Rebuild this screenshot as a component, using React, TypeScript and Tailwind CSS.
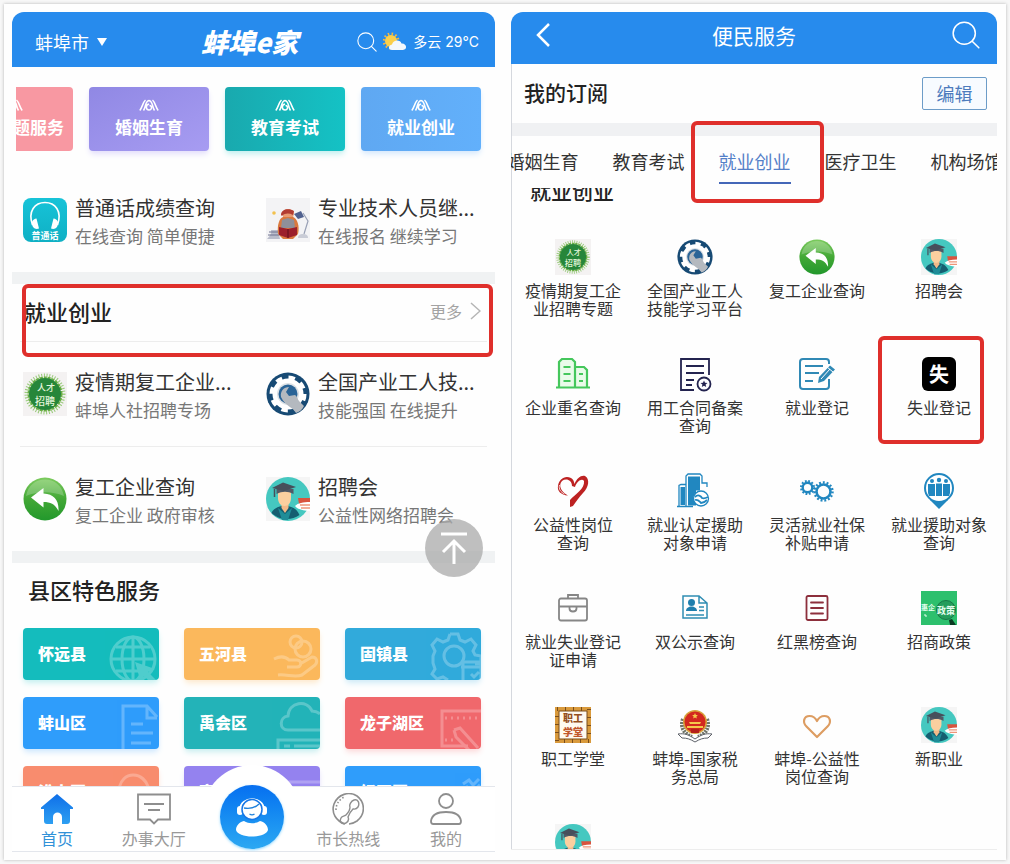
import type { ReactNode } from 'react'

interface IconProps {
  className?: string
}

/* ---------- shared service icons ---------- */

function SearchIcon({ className }: IconProps) {
  return (
    <svg viewBox="0 0 24 24" className={className} fill="none" stroke="currentColor" strokeWidth="1.300" strokeLinecap="round">
      <circle cx="10.5" cy="10.5" r="9.500" />
      <path d="M17.3 17.3 23 23" />
    </svg>
  )
}

function HeadphoneIcon({ className }: IconProps) {
  return (
    <svg viewBox="0 0 44 44" className={className}>
      <defs>
        <linearGradient id="hp" x1="0" y1="0" x2="0" y2="1">
          <stop offset="0" stopColor="#17c3d8" />
          <stop offset="1" stopColor="#0fb0c4" />
        </linearGradient>
      </defs>
      <rect width="44" height="44" rx="8" fill="url(#hp)" />
      <path d="M9.500 27C4.500 13 12 4.500 22 4.500S39.500 13 34.500 27" fill="none" stroke="#fff" strokeWidth="1.600" />
      <path d="M13.500 20.500c-4 .5-6 4-3.500 8.500 1.500 2 4 2.500 6 1.500zM30.500 20.500c4 .5 6 4 3.500 8.500-1.500 2-4 2.500-6 1.500z" fill="#fff" />
      <text x="22" y="41" textAnchor="middle" fontSize="9" fontWeight="700" fill="#fff">普通话</text>
    </svg>
  )
}

function ReaderIcon({ className }: IconProps) {
  return (
    <svg viewBox="0 0 44 44" className={className}>
      <rect width="44" height="44" fill="#f3f3f5" />
      <path d="M1 41c3-3 5-6 4-9h7l2 9z" fill="#b9bccb" />
      <path d="M3 34h10M2 37h11" stroke="#6e7390" />
      <circle cx="8" cy="15" r="1.800" fill="#f2c14e" />
      <path d="M17 20v-5c0-3 3-4 5-4s6 1 6 4l-1 5z" fill="#e89a72" />
      <path d="M15 17c0-6 8-7 13-4l-1 4c-4-2-8-2-11 1z" fill="#b23c32" />
      <path d="M12 36c-1-8 1-16 5-17h10c4 1 7 9 5 17l-5 5H17z" fill="#d9793f" />
      <path d="M16 22l6-2 6 2 1 8H15z" fill="#8f8f99" />
      <path d="M13 29l9 2 9-2v8l-9 3-9-3z" fill="#9c1f2c" />
      <path d="M22 31v9" stroke="#5e0f19" />
      <path d="M28 16l7-3 3 6-6 2z" fill="#50618f" />
      <path d="M37 15l5 8-4 13" fill="none" stroke="#98a0b5" strokeWidth="1.200" />
      <path d="M32 40c0-3 2-4 5-4s5 1 5 4z" fill="#c9ccd6" />
    </svg>
  )
}

function TalentIcon({ className }: IconProps) {
  return (
    <svg viewBox="0 0 44 44" className={className}>
      <rect width="44" height="44" fill="#f4f2f2" />
      <circle cx="22" cy="22" r="18" fill="none" stroke="#9acb7c" strokeWidth="5" strokeDasharray="1 1.600" />
      <circle cx="22" cy="22" r="16.500" fill="none" stroke="#6aae45" strokeWidth="2" strokeDasharray="3 1" />
      <circle cx="22" cy="22" r="16" fill="#26863a" />
      <g fill="#e4f6da" fontWeight="500" textAnchor="middle">
        <text x="23" y="19" fontSize="9">人才</text>
        <text x="22" y="33" fontSize="10">招聘</text>
      </g>
    </svg>
  )
}

function GearWrenchIcon({ className }: IconProps) {
  return (
    <svg viewBox="0 0 44 44" className={className}>
      <circle cx="22" cy="22" r="21.500" fill="#174a74" />
      <circle cx="22" cy="22" r="15.500" fill="#fff" />
      <circle cx="22" cy="22" r="16" fill="none" stroke="#fff" strokeWidth="5" strokeDasharray="6.300 6.270" />
      <circle cx="22" cy="22" r="11" fill="#dde1e5" />
      <circle cx="22" cy="22" r="9.500" fill="#2a6497" />
      <path d="M15 25c-1-6 3-10 8-10l-3 5 3 4 6-1c2 1 2 3 4 6l5 5c-2 4-5 6-8 7-3-6-11-7-15-16z" fill="#b4b9bf" />
    </svg>
  )
}

function ReplyIcon({ className }: IconProps) {
  return (
    <svg viewBox="0 0 44 44" className={className}>
      <defs>
        <linearGradient id="reply" x1="0" y1="0" x2="0" y2="1">
          <stop offset="0" stopColor="#7ccb5e" />
          <stop offset=".5" stopColor="#43a836" />
          <stop offset="1" stopColor="#22982c" />
        </linearGradient>
      </defs>
      <circle cx="22" cy="22" r="21.500" fill="url(#reply)" />
      <path d="M3 19C5 8 13 2.500 22 2.500S39 8 41 19c-12-5-26-5-38 0z" fill="#fff" opacity=".22" />
      <path d="M8 20.500 20.500 11v5.500C31 17 36 23 35.500 34 32 27 28 25 20.500 25v5.500z" fill="#fff" />
    </svg>
  )
}

function GraduateIcon({ className }: IconProps) {
  return (
    <svg viewBox="0 0 44 44" className={className}>
      <rect width="44" height="44" fill="#f5f5f5" />
      <circle cx="22" cy="22" r="22" fill="#45c8c0" />
      <path d="M5.500 36c2-5 7-6 10-7h6c4 1 9 2 12 9a22 22 0 0 1-28-2z" fill="#155e70" />
      <path d="M12 31l4 12h6l4-12-7 6z" fill="#1f8d98" />
      <path d="M15.500 25h7v6L19 36l-3.500-5z" fill="#f2b988" />
      <path d="M12 14h13v7c0 5-3 8-6.500 8S12 26 12 21z" fill="#fbcf9f" />
      <path d="M10.500 12h17v5c-6-3-11-3-17 0z" fill="#515966" />
      <path d="M6 11 17 5.500l13 4.500-12 4z" fill="#474f5b" />
      <path d="M8.500 12v8" stroke="#474f5b" strokeWidth="1.500" />
      <path d="M32 21h12v6H33z" fill="#d9543f" />
      <path d="M29 29c3-3 8-4 15-4v9c-5 0-9-1-13-3z" fill="#fff" />
      <path d="M34 28h10M35 31h9" stroke="#ee9579" strokeWidth="1.500" />
    </svg>
  )
}

/* ---------- icons used only on the service grid ---------- */

function BuildingIcon({ className }: IconProps) {
  return (
    <svg viewBox="0 0 36 36" className={className} fill="none" stroke="#45c75c" strokeWidth="2.200">
      <path d="M4 31.500V6l3-3h10l3 3v5h9l3 3v17.500z" fill="#e9fbe9" stroke="none" />
      <path d="M1 31.500h34M4 31V6l3-3h10l3 3v25M20 11h9l3 3v17" />
      <path d="M8.500 11h7M8.500 18h7M8.500 25h7M24 18h4M24 25h4" strokeWidth="1.800" />
    </svg>
  )
}

function ContractIcon({ className }: IconProps) {
  return (
    <svg viewBox="0 0 36 36" className={className} fill="none" stroke="#23234f" strokeWidth="1.800">
      <path d="M17 34H4V3h28v16" />
      <path d="M9 10h18M9 17h18M9 24h8M9 29h6" />
      <circle cx="27" cy="28" r="6.500" />
      <path d="m27 24.500 1 2.300 2.500.2-1.900 1.600.6 2.400-2.200-1.300-2.200 1.300.6-2.400-1.900-1.600 2.500-.2z" fill="#23234f" stroke="none" />
    </svg>
  )
}

function RegisterIcon({ className }: IconProps) {
  return (
    <svg viewBox="0 0 36 36" className={className} fill="none" stroke="#3089b5" strokeWidth="2">
      <path d="M30 8V6c0-2-1-3-3-3H4C2 3 1 4 1 6v24c0 2 1 3 3 3h23c2 0 3-1 3-3v-7" />
      <path d="M6 10h18M6 17h14M6 25h8" />
      <path d="M19 27l1-6L31 9.500l5 4L25 25z" fill="#3089b5" stroke="none" />
      <path d="M22 23 31 13M28 11l6 5" stroke="#fff" strokeWidth="1" />
    </svg>
  )
}

function UnemployIcon({ className }: IconProps) {
  return (
    <svg viewBox="0 0 36 36" className={className}>
      <rect x="1" y="1" width="34" height="34" rx="6" fill="#000" />
      <text x="18" y="25.500" textAnchor="middle" fontSize="20" fontWeight="700" fill="#fff">失</text>
    </svg>
  )
}

function RibbonHeartIcon({ className }: IconProps) {
  return (
    <svg viewBox="0 0 36 36" className={className}>
      <path
        d="M13 22.500C6 22 2 18 3 13 4 6 10 2 16 5c2 1 3 3 3.500 6C22 5 26 2 30 3c5 3 4 11-2 17-4 4-7 9-10 13l-3 1v-7c5-6 15-11 14-19-2-3-7 0-9 6l-3-1c0-6-6-8-10-5-4 4-1 11 6 14.500z"
        fill="#bd2222"
      />
      <path d="M4.500 12c-1 4 1 7 5 9" stroke="#fff" strokeWidth=".8" fill="none" />
    </svg>
  )
}

function CityHandIcon({ className }: IconProps) {
  return (
    <svg viewBox="0 0 36 36" className={className} fill="#2187c0">
      <path d="M11 3.500h12v14h-4v15h-8z" />
      <path d="M3.500 14H8v18H3.500z" />
      <g fill="none" stroke="#2187c0" strokeWidth="1.300">
        <path d="M9 33V3l2-2h12l2 2v7h5v4M2 33V12.500l2-1h5M0 33.500h16" />
        <circle cx="24" cy="25.500" r="7.500" fill="#fff" />
        <path d="M18 24c3-3 6-1 7 1 2 1 4 0 6-1M18 27c3-1 4 1 6 3 2 0 4-1 6-3" strokeWidth="1.800" />
      </g>
    </svg>
  )
}

function CogsIcon({ className }: IconProps) {
  return (
    <svg viewBox="0 0 36 36" className={className} fill="none" stroke="#2187c0">
      <circle cx="8.500" cy="14.500" r="4.800" strokeWidth="2.400" />
      <circle cx="8.500" cy="14.500" r="6.500" strokeWidth="2" strokeDasharray="1.800 1.600" />
      <circle cx="24.500" cy="18.500" r="7" strokeWidth="2.600" />
      <circle cx="24.500" cy="18.500" r="9" strokeWidth="2.500" strokeDasharray="1.900 1.870" />
    </svg>
  )
}

function PeoplePinIcon({ className }: IconProps) {
  return (
    <svg viewBox="0 0 36 36" className={className}>
      <path d="M9 27h18l-9 9z" fill="#2187c0" />
      <circle cx="18" cy="15" r="14" fill="#fff" stroke="#2187c0" strokeWidth="2" />
      <g fill="#2187c0">
        <circle cx="11" cy="8" r="2" />
        <circle cx="18" cy="7" r="2.200" />
        <circle cx="25" cy="8" r="2" />
        <path d="M7 11h7v12H8l-1-3zM15 10.500h6V23h-6zM22 11h7v9l-1 3h-6z" />
      </g>
    </svg>
  )
}

function BriefcaseIcon({ className }: IconProps) {
  return (
    <svg viewBox="0 0 36 36" className={className} fill="none" stroke="#868686" strokeWidth="1.800">
      <rect x="4" y="8.500" width="28" height="22" rx="2" />
      <path d="M13 8.500V5h10v3.500M4 16.500h28M14.500 16.500v2c0 4 7 4 7 0v-2" />
    </svg>
  )
}

function IdPaperIcon({ className }: IconProps) {
  return (
    <svg viewBox="0 0 36 36" className={className} fill="none" stroke="#2f8db3" strokeWidth="1.500">
      <path d="M6 6h16l8 7v15H6zM22 6v7h8" />
      <circle cx="14.500" cy="12.500" r="3.500" fill="#1f7fae" stroke="none" />
      <path d="M9 21c0-6 11-6 11 0z" fill="#1f7fae" stroke="none" />
      <path d="M22 17h5M22 20.500h5M9 25h18" />
    </svg>
  )
}

function ListBoardIcon({ className }: IconProps) {
  return (
    <svg viewBox="0 0 36 36" className={className} fill="none" stroke="#8d2f3c" strokeWidth="1.800" strokeLinecap="round">
      <rect x="7.500" y="6" width="21" height="24" rx="1.500" />
      <path d="M12 12.500h12M12 18h12M12 23.500h12" />
    </svg>
  )
}

function PolicyIcon({ className }: IconProps) {
  return (
    <svg viewBox="0 0 36 36" className={className}>
      <rect y="1" width="36" height="34" fill="#2dc06d" />
      <text x="0" y="20" fontSize="7" fontWeight="700" fill="#e6fff0">惠企</text>
      <path d="M3 25h2v2" stroke="#e6fff0" fill="none" />
      <circle cx="25" cy="20" r="9.500" fill="#259d5b" stroke="#187747" />
      <text x="25" y="24" fontSize="9" fontWeight="700" textAnchor="middle" fill="#e6fff0">政策</text>
      <path d="m28 30 3-1 4 6h-6z" fill="#0b3a22" />
    </svg>
  )
}

function SchoolIcon({ className }: IconProps) {
  return (
    <svg viewBox="0 0 36 36" className={className}>
      <rect width="36" height="36" fill="#d99a3c" />
      <rect x="2" y="2" width="32" height="32" fill="none" stroke="#7a4d1a" strokeWidth="4" strokeDasharray="1 7" />
      <rect x="4" y="4" width="28" height="28" fill="#fffaf0" stroke="#7a4d1a" />
      <g fontSize="10" fontWeight="900" textAnchor="middle">
        <text x="18" y="15" fill="#94501f">职工</text>
        <text x="18" y="29" fill="#c0562b">学堂</text>
      </g>
    </svg>
  )
}

function TaxIcon({ className }: IconProps) {
  return (
    <svg viewBox="0 0 36 36" className={className}>
      <path d="M6 12c-3 8 1 15 9 18M30 12c3 8-1 15-9 18" fill="none" stroke="#6f7468" strokeWidth="4" strokeDasharray="2 1" />
      <circle cx="18" cy="15" r="12" fill="#d8a13a" />
      <circle cx="18" cy="15" r="10.500" fill="#d3281f" />
      <path d="m18 6 .9 1.900 2 .2-1.500 1.400.4 2-1.800-1-1.800 1 .4-2-1.500-1.400 2-.2zM12 15h12l-1 2H13zM10 19h16v2H10z" fill="#f5c84b" />
      <path d="M14 22h8v4h-8z" fill="#b5201a" />
      <path d="M1 27c7-1 11 1 17 5 6-4 10-6 17-5l-4 4c-5 0-8 1-13 4-5-3-8-4-13-4z" fill="#fff" stroke="#5c6068" />
    </svg>
  )
}

function HeartIcon({ className }: IconProps) {
  return (
    <svg viewBox="0 0 36 36" className={className} fill="none" stroke="#dd9d62" strokeWidth="2.200" strokeLinejoin="round">
      <path d="M18 30 7.500 19.500C3 15 5 9 10.500 9c4 0 6 2 7.500 5 1.500-3 3.500-5 7.500-5C31 9 33 15 28.500 19.500z" />
    </svg>
  )
}

/* ---------- left phone ---------- */

function SpiralMark() {
  return (
    <svg viewBox="0 0 20 12" className="h-3 w-5" fill="none" stroke="#fff" strokeWidth="1.500">
      <path d="M.8 11.500C3 9 4 3 6.500 1M19.200 11.500C17 9 16 3 13.500 1" />
      <path d="M4.500 11.500C7 8 6 2 10 1.500c4 .5 3 6.500 5.500 10M10 5c-4 1-3 6 0 6s3.500-4.500.5-4.500" />
    </svg>
  )
}

const topics = [
  { label: '特色主题服务', color: 'bg-[#f898a2]' },
  { label: '婚姻生育', color: 'bg-linear-to-br from-[#9088e4] to-[#a79cf2] shadow-md shadow-[#e4e0fb]' },
  { label: '教育考试', color: 'bg-linear-to-r from-[#19a9ae] to-[#14c2c5] shadow-md shadow-[#c5f0f0]' },
  { label: '就业创业', color: 'bg-linear-to-r from-[#5fa8f2] to-[#62b0fb] shadow-md shadow-[#d8eafd]' },
]

function ServiceItem({ icon, title, note }: { icon: ReactNode; title: string; note: string }) {
  return (
    <a href="#service" className="flex gap-2">
      <span className="flex h-12 w-11 shrink-0 items-center">{icon}</span>
      <span className="flex flex-col gap-1 whitespace-nowrap leading-6">
        <span className="text-[20px] text-[#333]">{title}</span>
        <span className="text-[17px] text-[#777]">{note}</span>
      </span>
    </a>
  )
}

function ServiceRow({ children }: { children: ReactNode }) {
  return <div className="grid grid-cols-[243fr_229fr] pt-7 pb-6 pl-[11px]">{children}</div>
}

const districts = [
  {
    name: '怀远县',
    color: 'bg-[#14bcbd] shadow-[#c9f1f1]',
    art: (
      <>
        <circle cx="34" cy="31" r="22" />
        <ellipse cx="34" cy="31" rx="11" ry="22" />
        <path d="M34 9v44M12 31h44M17 19h34M17 43h24" />
        <path d="m36 34 20 7-7 3 8 8-4 4-8-8-3 7z" fill="#fff" stroke="none" />
      </>
    ),
  },
  {
    name: '五河县',
    color: 'bg-[#fbb85c] shadow-[#fdebd2]',
    art: (
      <>
        <circle cx="36" cy="14" r="6" />
        <circle cx="43" cy="21" r="8" />
        <path d="M14 31c6-3 11-3 15 1h8c5 0 5 7 0 7H27M40 36l12-7c5 0 6 5 3 8L42 47c-7 3-15-1-24 0" />
      </>
    ),
  },
  {
    name: '固镇县',
    color: 'bg-[#31aadb] shadow-[#d2ecf8]',
    art: (
      <>
        <circle cx="33" cy="28" r="10" />
        <path d="M29 6h8l2 6 5 2 6-3 5 6-3 6 2 4 6 1v8h-6M29 6l-2 6-5 2-6-3-5 6 3 6-2 5-0 7 2 6-3 5 5 5 6-2 5 3" />
        <path d="M42 34h18v20H42zM40 39h20M50 46l3 3 5-5" />
      </>
    ),
  },
  {
    name: '蚌山区',
    color: 'bg-[#2f9dfb] shadow-[#d2e9fe]',
    art: <path d="M24 54V9h24l10 11M48 9v12h10M32 27h12M32 36h22M32 46h20" />,
  },
  {
    name: '禹会区',
    color: 'bg-[#23b3b8] shadow-[#cdeff0]',
    art: (
      <>
        <path d="M60 33H28c-9 0-9-13 0-14 1-14 19-17 24-5 4 0 6 1 8 3" />
        <path d="M18 54V43h42M24 49h6M34 49h26" />
      </>
    ),
  },
  {
    name: '龙子湖区',
    color: 'bg-[#f0686c] shadow-[#fcdcdd]',
    art: (
      <>
        <path d="M60 14H21v35h26" />
        <path d="M24 21h36M24 43h12" strokeDasharray="2 4" />
        <path d="m33 33 6-2 18 20M33 33l2 7 14 14" />
      </>
    ),
  },
  {
    name: '淮上区',
    color: 'bg-[#f88c6e] shadow-[#fde2da]',
    art: <path d="M20 24c2-20 26-20 30 0M50 24c6 0 8 4 10 8" />,
  },
  {
    name: '高新区',
    color: 'bg-[#9482ef] shadow-[#e4e0fb]',
    art: <path d="M18 16h42M18 24h42M18 16v30" />,
  },
  {
    name: '经开区',
    color: 'bg-[#2f9dfb] shadow-[#d2e9fe]',
    art: <path d="m42 18 6-4 4 5 6-6M40 24l6-3 5 5 8-7" />,
  },
]

function HomePhone() {
  return (
    <section className="relative flex min-w-0 flex-col overflow-hidden" aria-label="蚌埠e家首页">
      <header className="flex h-[55px] shrink-0 items-center rounded-t-xl bg-[#278bed] pt-1 pr-4 pl-[23px] text-white">
        <button type="button" className="flex w-[166px] items-center gap-2 text-[18px] leading-6">
          蚌埠市
          <svg viewBox="0 0 10 8" className="h-2 w-2.5" fill="#fff">
            <path d="M0 0h10L5 8z" />
          </svg>
        </button>
        <h1 className="text-[27px] leading-8 font-black italic">蚌埠e家</h1>
        <div className="ml-auto flex items-center gap-1.5 whitespace-nowrap">
          <button type="button" aria-label="搜索">
            <SearchIcon className="h-5 w-5" />
          </button>
          <svg viewBox="0 0 24 20" className="h-5 w-6 shrink-0">
            <circle cx="8" cy="9" r="7" fill="none" stroke="#f6b93c" strokeWidth="3" strokeDasharray="1.500 2.200" />
            <circle cx="8" cy="9" r="6" fill="#fbcf4b" />
            <path d="M9 18c-4 0-4-5 0-5.500C10 8 17 7 18.500 11.500c5-.5 6.500 6 1.500 6.500z" fill="#f4f8fd" />
          </svg>
          <span className="font-[Inter,'Noto_Sans_CJK_SC',sans-serif] text-[14px] leading-6">多云 29°C</span>
        </div>
      </header>

      <div className="relative min-h-0 flex-1 overflow-hidden">
        <div className="mr-[9px] ml-1 flex justify-end gap-4 overflow-hidden pt-5 pr-[5px] pb-[17px]">
          {topics.map((t) => (
            <a
              key={t.label}
              href="#topic"
              className={`flex h-16 w-[120px] shrink-0 flex-col items-center justify-center gap-1 rounded-sm text-[17px] leading-6 font-bold whitespace-nowrap text-white ${t.color}`}
            >
              <SpiralMark />
              {t.label}
            </a>
          ))}
        </div>

        <ServiceRow>
          <ServiceItem icon={<HeadphoneIcon className="h-11 w-11" />} title="普通话成绩查询" note="在线查询 简单便捷" />
          <ServiceItem icon={<ReaderIcon className="h-11 w-11" />} title="专业技术人员继..." note="在线报名 继续学习" />
        </ServiceRow>

        <div className="relative border-t-12 border-[#f0f2f3]">
          <div className="flex h-[58px] items-center justify-between pr-[14px] pb-1 pl-3">
            <h2 className="text-[22px] leading-7 font-medium text-[#222]">就业创业</h2>
            <a href="#more" className="flex items-center gap-2 text-[16px] leading-6 text-[#a3a3a3]">
              更多
              <svg viewBox="0 0 11 18" className="h-[18px] w-[11px]" fill="none" stroke="#b5b5b5" strokeWidth="1.500">
                <path d="m1 1 9 8-9 8" />
              </svg>
            </a>
          </div>
          <div className="absolute top-0 right-0.5 left-2.5 h-[73px] rounded-md border-4 border-[#df2f2b]" />
        </div>
        <div className="mx-2 -mt-px h-px bg-[#ededed]" />

        <ServiceRow>
          <ServiceItem icon={<TalentIcon className="h-11 w-11" />} title="疫情期复工企业..." note="蚌埠人社招聘专场" />
          <ServiceItem icon={<GearWrenchIcon className="h-11 w-11" />} title="全国产业工人技..." note="技能强国 在线提升" />
        </ServiceRow>
        <div className="mx-2 h-px bg-[#ededed]" />
        <ServiceRow>
          <ServiceItem icon={<ReplyIcon className="h-11 w-11" />} title="复工企业查询" note="复工企业 政府审核" />
          <ServiceItem icon={<GraduateIcon className="h-11 w-11" />} title="招聘会" note="公益性网络招聘会" />
        </ServiceRow>

        <div className="border-t-12 border-[#f0f2f3] px-4 pt-3 pb-[25px]">
          <h2 className="text-[22px] leading-7 font-medium text-[#222]">县区特色服务</h2>
        </div>
        <div className="grid grid-cols-3 gap-x-[25px] gap-y-[17px] pr-[14px] pl-[11px]">
          {districts.map((d) => (
            <a
              key={d.name}
              href="#district"
              className={`relative flex h-[52px] items-center overflow-hidden rounded-sm pb-0.5 pl-[15px] text-[16px] leading-6 font-black text-white shadow-md ${d.color}`}
            >
              <svg viewBox="0 0 60 52" className="absolute right-0 bottom-0 h-[52px] w-[60px] opacity-25" fill="none" stroke="#fff" strokeWidth="3">
                {d.art}
              </svg>
              {d.name}
            </a>
          ))}
        </div>

        <button
          type="button"
          aria-label="返回顶部"
          className="absolute top-[452px] right-3 flex h-[58px] w-[58px] items-center justify-center rounded-full bg-[#a9a9a9]/75"
        >
          <svg viewBox="0 0 28 32" className="h-8 w-7" fill="none" stroke="#fff" strokeWidth="3">
            <path d="M1 2h26M14 32V9M3 20 14 9l11 11" />
          </svg>
        </button>
      </div>

      <nav className="relative grid h-[66px] shrink-0 grid-cols-[90fr_104fr_94fr_98fr_98fr] border-y border-[#e3e6ec] bg-white pt-1.5 text-[16px] leading-5 text-[#999]">
        <a href="#home" className="flex flex-col items-center gap-[3px] text-[#3191d8]">
          <svg viewBox="0 0 32 32" className="h-8 w-8">
            <defs>
              <linearGradient id="home" x1="0" y1="0" x2="0" y2="1">
                <stop offset="0" stopColor="#0f6fe8" />
                <stop offset="1" stopColor="#2d9ff2" />
              </linearGradient>
            </defs>
            <path d="M16 1 32 14.500v1.500h-3v12c0 2-1 3-3 3h-5v-7c0-6-9-6-9 0v7H6c-2 0-3-1-3-3V16H0v-1.500z" fill="url(#home)" />
          </svg>
          首页
        </a>
        <a href="#hall" className="flex flex-col items-center gap-[3px]">
          <svg viewBox="0 0 34 32" className="h-8 w-[34px]" fill="none" stroke="#8e8e8e" strokeWidth="1.800">
            <path d="M1 1.500h32v25H21L17 30.500l-4-4H1zM7 11h20M11 17h12" />
          </svg>
          办事大厅
        </a>
        <a href="#assistant" aria-label="智能客服" className="relative">
          <span className="absolute -top-7 left-1/2 h-[98px] w-[98px] -translate-x-1/2 rounded-full bg-white [clip-path:inset(0_0_20px_0)]" />
          <span className="absolute -top-2 left-1/2 flex h-16 w-16 -translate-x-1/2 items-center justify-center rounded-full bg-linear-to-b from-[#086ff0] to-[#2ca8f2] shadow-sm shadow-[#9fdcff]">
            <svg viewBox="0 0 32 40" className="h-10 w-8">
              <path d="M4 12C5 -1 27 -1 28 12" fill="none" stroke="#fff" strokeWidth="1.800" />
              <rect x="1" y="9" width="6" height="9" rx="3" fill="#fff" />
              <rect x="25" y="9" width="6" height="9" rx="3" fill="#fff" />
              <circle cx="16" cy="12.500" r="10" fill="#fff" stroke="#1777e6" strokeWidth="1.500" />
              <path d="M8 11c6 1 12-1 15-4M13.500 17c2 1.500 3 1.500 5 0" fill="none" stroke="#1d80dc" strokeWidth="1.300" />
              <path d="M8 24c5 3 11 3 16 0 5 1 8 5 8 9-1 4-8 6.500-16 6.500S1 37 0 33c0-4 3-8 8-9z" fill="#fff" />
            </svg>
          </span>
        </a>
        <a href="#hotline" className="flex flex-col items-center gap-[3px]">
          <svg viewBox="0 0 32 32" className="h-8 w-8" fill="none" stroke="#8e8e8e" strokeWidth="1.600">
            <path d="M13 31C4 28-1 20 2 11 6 1 17-2 25 3c8 6 9 18 0 25-3 2-5 3-8 3" />
            <path d="M22 7c4-1 6 3 4 7-2 3-4 2-5 2-2 2-4 5-5 8 1 2 1 4-2 6-4 2-7-1-5-5 1-2 4-2 5-3 2-2 4-5 4-8-1-2 1-6 4-7z" strokeWidth="1.400" />
            <path d="M4 17c0-6 3-10 8-13" strokeDasharray="1.500 2" />
          </svg>
          市长热线
        </a>
        <a href="#me" className="flex flex-col items-center gap-[3px]">
          <svg viewBox="0 0 32 32" className="h-8 w-8" fill="none" stroke="#8e8e8e" strokeWidth="1.800">
            <circle cx="16" cy="8" r="7" />
            <path d="M3 31c-2 0-2-2-2-3 1-7 7-9 15-9s14 2 15 9c0 1 0 3-2 3z" />
          </svg>
          我的
        </a>
      </nav>
    </section>
  )
}

/* ---------- right phone ---------- */

const tabs = ['婚姻生育', '教育考试', '就业创业', '医疗卫生', '机构场馆']

const services = [
  { label: '疫情期复工企\n业招聘专题', Icon: TalentIcon },
  { label: '全国产业工人\n技能学习平台', Icon: GearWrenchIcon },
  { label: '复工企业查询', Icon: ReplyIcon },
  { label: '招聘会', Icon: GraduateIcon },
  { label: '企业重名查询', Icon: BuildingIcon },
  { label: '用工合同备案\n查询', Icon: ContractIcon },
  { label: '就业登记', Icon: RegisterIcon },
  { label: '失业登记', Icon: UnemployIcon, marked: true },
  { label: '公益性岗位\n查询', Icon: RibbonHeartIcon },
  { label: '就业认定援助\n对象申请', Icon: CityHandIcon },
  { label: '灵活就业社保\n补贴申请', Icon: CogsIcon },
  { label: '就业援助对象\n查询', Icon: PeoplePinIcon },
  { label: '就业失业登记\n证申请', Icon: BriefcaseIcon },
  { label: '双公示查询', Icon: IdPaperIcon },
  { label: '红黑榜查询', Icon: ListBoardIcon },
  { label: '招商政策', Icon: PolicyIcon },
  { label: '职工学堂', Icon: SchoolIcon },
  { label: '蚌埠-国家税\n务总局', Icon: TaxIcon },
  { label: '蚌埠-公益性\n岗位查询', Icon: HeartIcon },
  { label: '新职业', Icon: GraduateIcon },
  { label: '', Icon: GraduateIcon },
]

function ServicesPhone() {
  return (
    <section className="mb-0.5 flex min-w-0 flex-col overflow-hidden border-b border-[#ededed]" aria-label="便民服务">
      <header className="flex h-[52px] shrink-0 items-center justify-between rounded-t-xl bg-[#278bed] pr-[17px] pb-1.5 pl-[25px] text-white">
        <button type="button" aria-label="返回" className="w-5">
          <svg viewBox="0 0 14 24" className="h-6 w-3.5" fill="none" stroke="#fff" strokeWidth="2.500">
            <path d="M13 1 2 12l11 11" />
          </svg>
        </button>
        <h1 className="text-[21px] leading-7">便民服务</h1>
        <button type="button" aria-label="搜索">
          <SearchIcon className="h-7 w-7" />
        </button>
      </header>

      <div className="flex min-h-0 flex-1 flex-col border-l border-[#d5d8de]">
        <div className="flex h-[59px] shrink-0 items-center justify-between pr-2.5 pl-3">
          <h2 className="pb-1 text-[21px] leading-7 font-medium text-[#222]">我的订阅</h2>
          <button type="button" className="h-[33px] w-[65px] rounded-xs border border-[#6c9cc8] bg-[#f7fbff] pb-0.5 text-[18px] leading-6 text-[#4d7bbd]">
            编辑
          </button>
        </div>

        <div className="relative shrink-0 border-t-[13px] border-[#f0f1f3]">
          <div className="-mx-px flex justify-center gap-[34px] overflow-hidden text-[18px] text-[#333]">
            {tabs.map((tab) => (
              <button
                key={tab}
                type="button"
                className={
                  tab === '就业创业'
                    ? 'h-12 shrink-0 border-b-2 border-[#4467b8] pt-1 text-[#5480c8]'
                    : 'h-12 shrink-0 border-b-2 border-transparent pt-1'
                }
              >
                {tab}
              </button>
            ))}
          </div>
          <div className="h-1" />
          <div className="absolute -top-[15px] left-1/2 z-10 -ml-16 h-[82px] w-[133px] rounded-md border-4 border-[#df2f2b]" />
        </div>

        <div className="min-h-0 flex-1 overflow-hidden">
          <h2 className="-mt-3 pl-[18px] text-[21px] leading-7 font-medium text-[#222]">就业创业</h2>
          <div className="-mr-[3px] grid auto-rows-[117px] grid-cols-4 pt-[35px]">
            {services.map(({ label, Icon, marked }, i) => (
              <a
                key={i}
                href="#service"
                aria-label={label || '招聘'}
                className="relative flex flex-col items-center gap-1.5 text-center text-[16px] leading-[18px] whitespace-pre text-[#333]"
              >
                <Icon className="h-9 w-9 shrink-0" />
                {label}
                {marked && <span className="absolute -top-5 left-0 h-[108px] w-[106px] rounded-md border-4 border-[#df2f2b]" />}
              </a>
            ))}
          </div>
        </div>
      </div>
    </section>
  )
}

export default function App() {
  return (
    <main
      lang="zh-CN"
      className="h-screen bg-[#f7f7f7] p-1 font-['Noto_Sans_CJK_SC',sans-serif]"
    >
      <div className="grid h-full grid-cols-[483fr_486fr] grid-rows-[minmax(0,1fr)] gap-4 bg-[#fefefe] pt-2 pr-[9px] pb-2 pl-2 shadow-[0_0_3px_#b5b5b5]">
        <HomePhone />
        <ServicesPhone />
      </div>
    </main>
  )
}
